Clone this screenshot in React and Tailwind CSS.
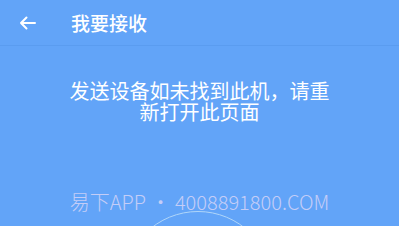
import React from "react";

const font = { fontFamily: '"Noto Sans CJK SC", "Noto Sans", sans-serif' };

export default function App() {
  return (
    <div
      className="relative w-[399px] h-[226px] overflow-hidden bg-[#62a4f8] text-white"
      style={font}
    >
      {/* Header */}
      <div className="flex items-center h-[46px] border-b border-[#5a9cf0]">
        <div className="w-[71px] flex items-center pl-[19px]">
          <svg width="17" height="14" viewBox="0 0 17 14" fill="none">
            <path
              d="M16 7H2M7.5 1.5L2 7l5.5 5.5"
              stroke="white"
              strokeWidth="2"
              strokeLinecap="round"
              strokeLinejoin="round"
            />
          </svg>
        </div>
        <h1 className="text-[19px] font-medium leading-none">我要接收</h1>
      </div>

      {/* Message */}
      <div className="flex justify-center mt-[34px]">
        <p className="w-[266px] text-center text-[20px] leading-[21px]">
          发送设备如未找到此机，请重新打开此页面
        </p>
      </div>

      {/* Watermark */}
      <div className="absolute left-0 right-0 top-[189px] flex justify-center">
        <span className="text-[20px] font-light leading-[26px] text-[#c4cdf7]">
          易下APP • 4008891800.COM
        </span>
      </div>

      {/* Scan ring */}
      <div className="absolute left-[123px] top-[211px] w-[150px] h-[150px] rounded-full border border-[#b0d6f8]" />
    </div>
  );
}
